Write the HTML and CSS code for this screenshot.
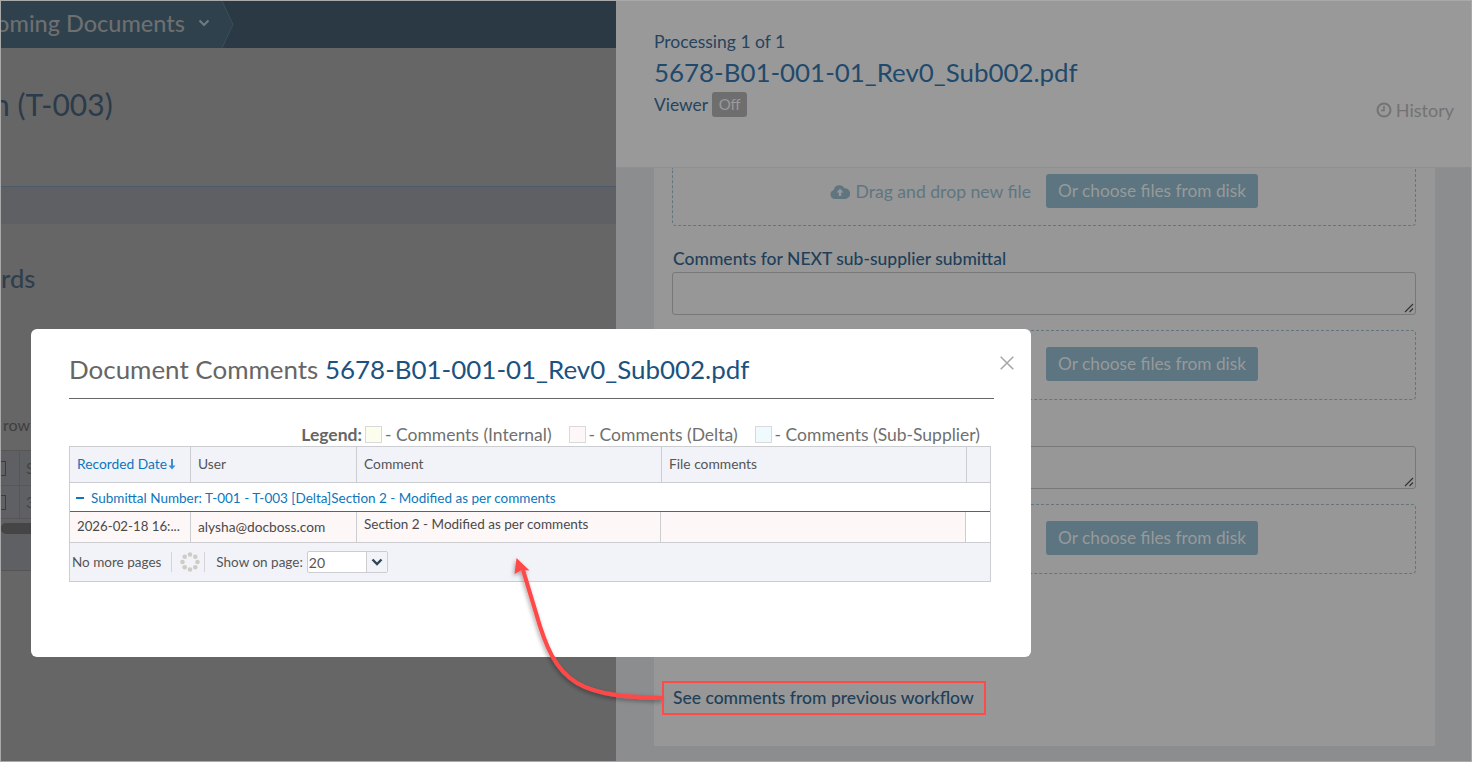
FILE: index.html
```html
<!DOCTYPE html>
<html lang="en">
<head>
<meta charset="utf-8">
<title>Document Comments</title>
<link rel="stylesheet" href="styles.css">
</head>
<body>
<div class="frame">
  <div class="left-pane">
    <nav class="topnav">
      <div class="crumb">
        <span class="crumb-clip"><span class="crumb-text">Incoming Documents</span></span>
        <svg class="crumb-caret" width="12" height="8" viewBox="0 0 12 8"><path d="M1.5 1.5 6 6l4.500-4.500" fill="none" stroke="#6f7a80" stroke-width="2.200"/></svg>
      </div>
      <svg class="crumb-tip" width="12" height="47" viewBox="0 0 12 47"><path d="M0 0 11 23.500 0 47Z" fill="#2e414d"/><path d="M0 0 11 23.500 0 47" fill="none" stroke="#3b4f5c"/></svg>
    </nav>
    <div class="page-title-row"><h1 class="page-title">n (T-003)</h1></div>
    <div class="tabbar"></div>
    <h2 class="section-title">rds</h2>
    <div class="grid-note">row</div>
    <div class="bg-grid">
      <div class="bg-row"><span class="bg-checkcell"><span class="bg-check"></span></span><span class="bg-cell">S</span></div>
      <div class="bg-row bg-row-short"><span class="bg-checkcell"><span class="bg-check"></span></span><span class="bg-cell">3</span></div>
      <div class="bg-scroll"><span class="bg-thumb"></span></div>
    </div>
  </div>
  <div class="right-pane">
    <header class="proc-head">
      <div class="proc-info">
        <div class="proc-count">Processing 1 of 1</div>
        <div class="proc-file">5678-B01-001-01_Rev0_Sub002.pdf</div>
        <div class="proc-viewer">Viewer <span class="off-badge">Off</span></div>
      </div>
      <div class="history">
        <svg width="16" height="16" viewBox="0 0 16 16"><circle cx="8" cy="8" r="6.500" fill="none" stroke="#737373" stroke-width="2"/><path d="M8 4v4.500H5" fill="none" stroke="#737373" stroke-width="1.600"/></svg>
        <span>History</span>
      </div>
    </header>
    <div class="panel">
      <div class="dropzone dropzone-first">
        <svg class="cloud" width="20" height="15" viewBox="0 0 20 15"><path d="M5 15a4.600 4.600 0 0 1-1.200-9A5.600 5.600 0 0 1 14.400 4.400a4.800 4.800 0 0 1 1 10.600Z" fill="#5f7680"/><path d="M10 4.500 13.400 8.500h-2.200V12H8.800V8.500H6.600Z" fill="#979797"/></svg>
        <span class="drop-label">Drag and drop new file</span>
        <span class="choose-btn">Or choose files from disk</span>
      </div>
      <label class="field-label">Comments for NEXT sub-supplier submittal</label>
      <div class="fake-textarea"><svg class="grip" width="10" height="10" viewBox="0 0 10 10"><path d="M1 9 9 1M5.500 9 9 5.500" stroke="#333" stroke-width="1.100"/></svg></div>
      <div class="dropzone">
        <span class="choose-btn">Or choose files from disk</span>
      </div>
      <div class="field-label-spacer"></div>
      <div class="fake-textarea"><svg class="grip" width="10" height="10" viewBox="0 0 10 10"><path d="M1 9 9 1M5.500 9 9 5.500" stroke="#333" stroke-width="1.100"/></svg></div>
      <div class="dropzone">
        <span class="choose-btn">Or choose files from disk</span>
      </div>
      <a class="prev-link">See comments from previous workflow</a>
    </div>
  </div>
</div>

<section class="modal">
  <button class="modal-close" aria-label="Close">
    <svg width="14" height="14" viewBox="0 0 14 14"><path d="M.7.7l12.600 12.600M13.300.7.700 13.300" stroke="#a6a6a6" stroke-width="1.500" fill="none"/></svg>
  </button>
  <h3 class="modal-title">Document Comments <span class="modal-file">5678-B01-001-01_Rev0_Sub002.pdf</span></h3>
  <div class="legend">
    <b class="legend-title">Legend:</b>
    <span class="swatch swatch-internal"></span><span class="legend-text">- Comments (Internal)</span>
    <span class="swatch swatch-delta"></span><span class="legend-text">- Comments (Delta)</span>
    <span class="swatch swatch-sub"></span><span class="legend-text">- Comments (Sub-Supplier)</span>
  </div>
  <div class="cgrid">
    <div class="cgrid-row cgrid-head">
      <div class="cell c-date sortable">Recorded Date<svg width="8" height="12" viewBox="0 0 8 12"><path d="M3 1h2v6.500h2.500L4 11.500.5 7.500H3Z" fill="#3d8fcc"/></svg></div>
      <div class="cell c-user">User</div>
      <div class="cell c-comment">Comment</div>
      <div class="cell c-file">File comments</div>
      <div class="cell c-end"></div>
    </div>
    <div class="cgrid-group"><span class="minus"></span>Submittal Number: T-001 - T-003 [Delta]Section 2 - Modified as per comments</div>
    <div class="cgrid-row cgrid-data">
      <div class="tint">
        <div class="cell c-date">2026-02-18 16:...</div>
        <div class="cell c-user">alysha@docboss.com</div>
        <div class="cell c-comment cell-top">Section 2 - Modified as per comments</div>
        <div class="cell c-file"></div>
      </div>
      <div class="cell c-end"></div>
    </div>
    <div class="cgrid-pager">
      <span>No more pages</span>
      <span class="pager-sep"></span>
      <svg class="spinner" width="20" height="20" viewBox="0 0 20 20"><g fill="#cfccc4"><circle cx="10" cy="2.500" r="2.300"/><circle cx="15.300" cy="4.700" r="2.300"/><circle cx="17.500" cy="10" r="2.300"/><circle cx="15.300" cy="15.300" r="2.300"/><circle cx="10" cy="17.500" r="2.300"/><circle cx="4.700" cy="15.300" r="2.300"/><circle cx="2.500" cy="10" r="2.300"/><circle cx="4.700" cy="4.700" r="2.300"/></g></svg>
      <span class="pager-sep"></span>
      <span>Show on page:</span>
      <span class="page-select"><span class="page-value">20</span><span class="page-arrow"><svg width="12" height="8" viewBox="0 0 12 8"><path d="M1.500 1.500 6 6l4.500-4.500" fill="none" stroke="#2f4456" stroke-width="2.400"/></svg></span></span>
    </div>
  </div>
</section>

<svg class="annotation" width="1472" height="762" viewBox="0 0 1472 762">
  <defs>
    <filter id="arrow-shadow" x="-20%" y="-20%" width="140%" height="140%"><feDropShadow dx="-1" dy="2" stdDeviation="2" flood-color="#000" flood-opacity=".35"/></filter>
  </defs>
  <g filter="url(#arrow-shadow)">
    <path d="M663 698C625 697 598 695 577 683 555 670 545 645 536 613L523 570" fill="none" stroke="#ff4a4a" stroke-width="4.200"/>
    <path d="M516.500 558 529.500 570.500 522 570 514.500 574Z" fill="#ff4a4a"/>
  </g>
  <rect x="663" y="682" width="322" height="32" fill="none" stroke="#ff4a4a" stroke-width="2"/>
</svg>
</body>
</html>
```
FILE: styles.css
```css
* { box-sizing: border-box; }
html, body { margin: 0; height: 100%; }
body {
  width: 1472px;
  height: 762px;
  overflow: hidden;
  font-family: Lato, "Noto Sans", sans-serif;
  background: #666;
  position: relative;
}
.frame {
  display: grid;
  grid-template-columns: 615px 855px;
  height: 762px;
  border: 1px solid #a9a9a9;
}

/* left dimmed page */
.left-pane { background: #666; overflow: hidden; display: flex; flex-direction: column; color: #2d3d4c; }
.topnav { height: 47px; background: #2b3945; display: flex; flex: none; }
.crumb { width: 221px; background: #2e414d; display: flex; align-items: center; gap: 13px; padding-bottom: 3px; }
.crumb-clip { width: 184px; overflow: hidden; display: flex; justify-content: flex-end; white-space: nowrap; flex: none; }
.crumb-text { font-size: 23.500px; color: #6d6f70; font-weight: 500; flex: none; }
.crumb-tip { flex: none; }
.page-title-row { height: 139px; padding-top: 36px; flex: none; border-bottom: 1px solid #4c5b69; overflow: hidden; }
.page-title { margin: 0 0 0 -8px; font-size: 30px; font-weight: 400; line-height: 40px; color: #2b3b4a; }
.tabbar { height: 37px; flex: none; background: #5f6064; }
.section-title { margin: 36px 0 0; font-size: 25.500px; font-weight: 500; line-height: 36px; color: #2e3e4d; flex: none; }
.grid-note { margin-top: 119px; padding-left: 2px; font-size: 16px; line-height: 20px; color: #3f3f3f; flex: none; }
.bg-grid { margin-top: 15px; background: #5f6063; border-top: 1px solid #575757; border-bottom: 1px solid #555; flex: none; height: 121px; }
.bg-row { height: 35px; display: flex; align-items: center; border-bottom: 1px solid #575757; color: #444; font-size: 15px; }
.bg-row-short { height: 33px; }
.bg-checkcell { width: 19px; height: 100%; flex: none; border-right: 1px solid #575757; display: flex; align-items: center; }
.bg-check { width: 5px; height: 15px; border: 1px solid #3c3c3c; border-left: 0; }
.bg-cell { padding-left: 6px; }
.bg-scroll { height: 16px; padding-top: 4px; }
.bg-thumb { display: block; width: 100%; height: 11px; background: #454545; border-radius: 5px; }

/* right dimmed panel */
.right-pane { background: #8c8d8f; display: flex; flex-direction: column; overflow: hidden; }
.proc-head {
  height: 167px;
  flex: none;
  background: #999;
  border-bottom: 1px solid #8b9193;
  padding: 31px 17px 0 38px;
  display: flex;
  justify-content: space-between;
}
.proc-count { font-size: 17.500px; line-height: 20px; color: #26435d; }
.proc-file { font-size: 25.900px; line-height: 32px; margin-top: 4px; color: #1f4a6c; }
.proc-viewer { font-size: 17.400px; line-height: 24px; margin-top: 4px; color: #26435d; display: flex; align-items: center; gap: 4px; }
.off-badge { background: #6e6e6e; color: #9a9a9a; font-size: 15px; line-height: 25px; height: 25px; border-radius: 3px; width: 35px; text-align: center; }
.history { margin-top: 67px; display: flex; align-items: center; gap: 4px; height: 22px; font-size: 18px; color: #737373; }
.panel {
  flex: 1;
  margin: 0 36px 15px 38px;
  background: #979797;
  padding: 0 19px 0 18px;
  display: flex;
  flex-direction: column;
}
.dropzone {
  height: 70px;
  margin-top: 15px;
  flex: none;
  border: 1px dashed #64757d;
  border-radius: 4px;
  padding-top: 16px;
  display: flex;
  justify-content: flex-end;
  align-items: flex-start;
  padding-right: 157px;
}
.dropzone-first { height: 58px; margin-top: 0; border-top: 0; border-radius: 0 0 4px 4px; padding-top: 6px; }
.cloud { margin-top: 10px; margin-right: 5px; flex: none; }
.drop-label { font-size: 17.600px; line-height: 36px; color: #5f7680; margin-right: 15px; }
.choose-btn {
  width: 212px;
  height: 34px;
  background: #5c7580;
  color: #979a9b;
  font-size: 17.300px;
  line-height: 33px;
  text-align: center;
  border-radius: 3px;
  flex: none;
}
.field-label { font-size: 17.500px; font-weight: 500; line-height: 22px; margin-top: 22px; padding-left: 1px; color: #213f59; flex: none; }
.field-label-spacer { height: 22px; margin-top: 22px; flex: none; }
.fake-textarea {
  height: 43px;
  margin-top: 2px;
  flex: none;
  border: 1px solid #787878;
  border-radius: 3px;
  display: flex;
  justify-content: flex-end;
  align-items: flex-end;
}
.grip { flex: none; margin: 0 1px 1px 0; }
.prev-link { margin: 112px 0 0 1px; font-size: 17.500px; font-weight: 500; line-height: 24px; color: #213f59; flex: none; }

/* modal */
.modal {
  position: absolute;
  left: 31px;
  top: 329px;
  width: 1000px;
  height: 328px;
  background: #fff;
  border-radius: 6px;
  padding: 0 37px 0 38px;
}
.modal-close { position: absolute; right: 17px; top: 27px; width: 14px; height: 14px; padding: 0; border: 0; background: none; display: flex; }
.modal-title {
  margin: 0;
  height: 70px;
  width: 925px;
  padding-top: 21px;
  font-size: 25.950px;
  line-height: 38px;
  font-weight: 400;
  color: #666;
  border-bottom: 1px solid #666;
}
.modal-file { color: #1b5280; }
.legend { display: flex; justify-content: flex-end; align-items: center; height: 24px; margin-top: 23px; padding-right: 11px; width: 922px; font-size: 17.500px; color: #707070; }
.legend-title { font-weight: 700; margin-right: 3px; color: #666; }
.swatch { width: 17px; height: 17px; border: 1px solid #d9d9d9; margin-right: 3px; flex: none; }
.swatch-internal { background: #fdfdee; }
.swatch-delta { background: #fdf7f7; margin-left: 17px; }
.swatch-sub { background: #effaff; margin-left: 17px; }
.cgrid { width: 922px; border: 1px solid #cbcdd1; font-size: 13.500px; color: #555; }
.cgrid-row { display: flex; }
.cell { display: flex; align-items: center; padding-left: 7px; border-right: 1px solid #cbcdd1; white-space: nowrap; flex: none; }
.c-date { width: 121px; gap: 1px; }
.c-user { width: 166px; }
.c-comment { width: 305px; }
.c-file { width: 305px; }
.c-end { width: 23px; border-right: 0; }
.cgrid-head { height: 36px; background: #f1f3f8; border-bottom: 1px solid #cbcdd1; font-size: 13.800px; }
.cgrid-head .cell { padding-bottom: 2px; }
.sortable { color: #0d76bd; }
.cgrid-group { height: 29px; display: flex; align-items: center; color: #0d76bd; background: #fff; border-bottom: 1px solid #2f6ea3; padding: 2px 0 0 6px; }
.minus { width: 8px; height: 2px; background: #0d76bd; margin-right: 7px; }
.cgrid-data { height: 31px; border-bottom: 1px solid #cbcdd1; color: #4a4a4a; }
.cgrid-data .cell { padding-bottom: 2px; }
.cgrid-data .c-date { font-size: 13.250px; }
.cgrid-data .c-user { font-size: 13.750px; }
.tint { display: flex; background: #fdf7f7; flex: none; }
.tint .c-comment { width: 304px; }
.cgrid-data .cell-top { align-items: flex-start; padding: 4px 0 0 7px; }
.cgrid-pager { height: 38px; background: #f1f3f8; display: flex; align-items: center; padding: 0 0 1px 2px; color: #555; }
.pager-sep { width: 1px; height: 20px; background: #d5d5d5; margin: 0 8px 0 10px; }
.spinner + .pager-sep { margin: 0 11px 0 4px; }
.page-select { display: flex; margin-left: 4px; height: 22px; width: 81px; border: 1px solid #cbcdd1; border-radius: 2px; background: #fff; }
.page-value { width: 59px; border-right: 1px solid #cbcdd1; padding-left: 1px; font-size: 14px; line-height: 21px; }
.page-arrow { flex: 1; background: #f1f3f8; display: flex; align-items: center; justify-content: center; }

.annotation { position: absolute; left: 0; top: 0; pointer-events: none; }
```
